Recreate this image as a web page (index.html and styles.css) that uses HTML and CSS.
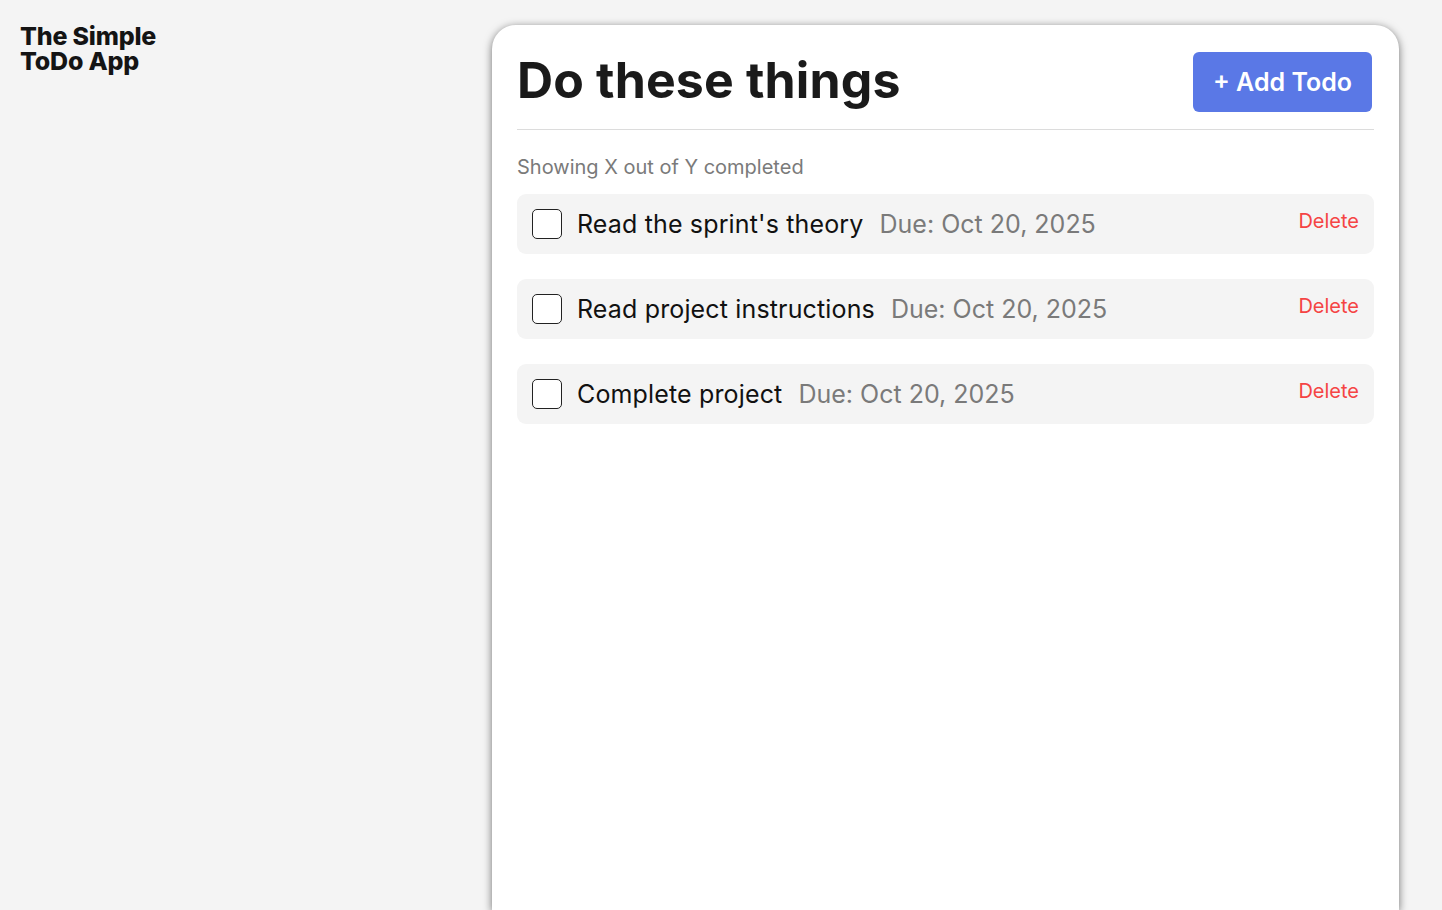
FILE: index.html
```html
<!DOCTYPE html>
<html lang="en">
<head>
<meta charset="utf-8">
<title>The Simple ToDo App</title>
<link rel="stylesheet" href="styles.css">
</head>
<body>
<div class="page">
  <aside class="sidebar">
    <div class="logo"><span class="logo-line">The Simple</span><span class="logo-line">ToDo App</span></div>
  </aside>
  <main class="card">
    <header class="card-header">
      <h1 class="title">Do these things</h1>
      <button class="add-btn">+ Add Todo</button>
    </header>
    <p class="summary">Showing X out of Y completed</p>
    <ul class="todos">
      <li class="todo">
        <span class="check"></span>
        <span class="todo-name">Read the sprint's theory</span>
        <span class="todo-due">Due: Oct 20, 2025</span>
        <button class="delete">Delete</button>
      </li>
      <li class="todo">
        <span class="check"></span>
        <span class="todo-name">Read project instructions</span>
        <span class="todo-due">Due: Oct 20, 2025</span>
        <button class="delete">Delete</button>
      </li>
      <li class="todo">
        <span class="check"></span>
        <span class="todo-name">Complete project</span>
        <span class="todo-due">Due: Oct 20, 2025</span>
        <button class="delete">Delete</button>
      </li>
    </ul>
  </main>
</div>
</body>
</html>
```
FILE: styles.css
```css
* { box-sizing: border-box; }
html, body {
  margin: 0;
  padding: 0;
  height: 100%;
  overflow: hidden;
}
body {
  background: #f4f4f4;
  font-family: Inter, "Noto Sans", sans-serif;
  color: #1a1a1a;
}
.page {
  display: flex;
  height: 100%;
}
.sidebar {
  width: 492px;
  flex: none;
  padding: 24px 0 0 20px;
}
.logo {
  font-size: 25px;
  font-weight: 800;
  letter-spacing: -0.2px;
  line-height: 25px;
  color: #141414;
}
.logo-line {
  display: block;
  height: 25px;
}
.card {
  width: 907px;
  flex: none;
  margin-top: 25px;
  background: #fff;
  border-radius: 24px 24px 0 0;
  box-shadow: 0 2px 8px rgba(0, 0, 0, 0.55);
  padding: 27px 25px 0 25px;
}
.card-header {
  display: flex;
  justify-content: space-between;
  align-items: flex-start;
  padding-bottom: 17px;
  border-bottom: 1px solid #dcdcdc;
}
.title {
  margin: 0;
  font-size: 50px;
  font-weight: 700;
  line-height: 56px;
  letter-spacing: 0.15px;
  color: #1a1a1a;
}
.add-btn {
  margin-right: 2px;
  width: 179px;
  height: 60px;
  border: none;
  border-radius: 6px;
  background: #5a78e6;
  color: #fff;
  font-family: Inter, "Noto Sans", sans-serif;
  font-size: 25px;
  font-weight: 600;
  cursor: pointer;
}
.summary {
  margin: 24px 0 14px;
  font-size: 20px;
  line-height: 26px;
  color: #7a7a7a;
}
.todos {
  list-style: none;
  margin: 0;
  padding: 0;
  display: flex;
  flex-direction: column;
  gap: 25px;
}
.todo {
  height: 60px;
  background: #f4f4f4;
  border-radius: 9px;
  display: flex;
  align-items: center;
  padding: 0 15px;
}
.check {
  width: 30px;
  height: 30px;
  border: 1px solid #222;
  border-radius: 5px;
  background: #fff;
  flex: none;
  margin-right: 15px;
}
.todo-name {
  font-size: 25px;
  letter-spacing: 0.15px;
  color: #111;
  margin-right: 16px;
}
.todo-due {
  font-size: 25px;
  color: #7a7a7a;
}
.delete {
  margin-left: auto;
  margin-bottom: 6px;
  border: none;
  background: none;
  padding: 0;
  font-family: Inter, "Noto Sans", sans-serif;
  font-size: 20px;
  color: #f54444;
  cursor: pointer;
}
```
